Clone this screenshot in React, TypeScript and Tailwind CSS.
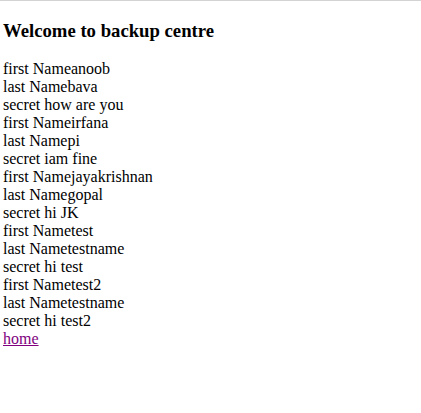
const records = [
  { first: 'anoob', last: 'bava', secret: 'how are you' },
  { first: 'irfana', last: 'pi', secret: 'iam fine' },
  { first: 'jayakrishnan', last: 'gopal', secret: 'hi JK' },
  { first: 'test', last: 'testname', secret: 'hi test' },
  { first: 'test2', last: 'testname', secret: 'hi test2' },
];

export default function App() {
  return (
    <div className="min-h-[413px] bg-white border-t border-[#d3d3d3] pl-[3px] text-black font-['Liberation_Serif',serif] text-base">
      <h3 className="mt-[19px] mb-[18px] text-[18.72px] font-bold leading-[22px]">Welcome to backup centre</h3>
      <div className="leading-[18px]">
        {records.map((r) => (
          <div key={r.first}>
            <div>first Name{r.first}</div>
            <div>last Name{r.last}</div>
            <div>secret {r.secret}</div>
          </div>
        ))}
        <a href="#" className="text-[#800080] underline">home</a>
      </div>
    </div>
  );
}
